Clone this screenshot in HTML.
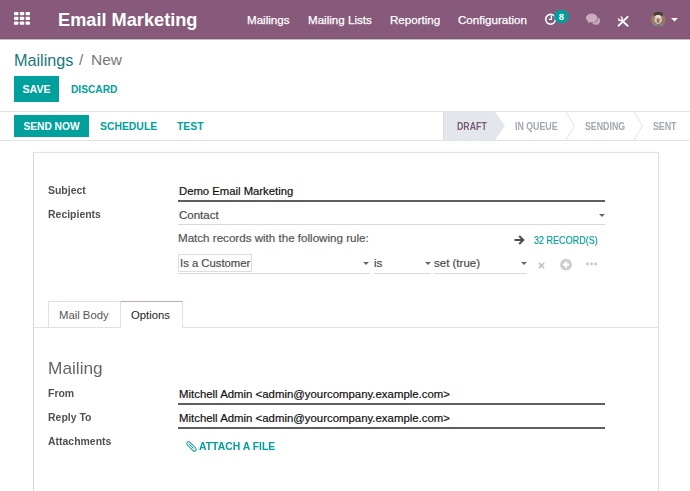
<!DOCTYPE html>
<html><head><meta charset="utf-8">
<style>
*{box-sizing:border-box;margin:0;padding:0}
html,body{width:690px;height:491px;overflow:hidden;background:#fff;font-family:"Liberation Sans",sans-serif;color:#4c4c4c}
.a{position:absolute;white-space:nowrap}
#nav{position:absolute;left:0;top:0;width:690px;height:40px;background:#875A7B;border-bottom:1px solid #c9bcc5;box-shadow:inset 0 -1px 0 #7d5272}
#nav .m{position:absolute;top:13px;-webkit-text-stroke:0.25px #fff;color:#fff;font-size:11.6px;line-height:14px}
.teal{color:#00A09D}
.btn{position:absolute;background:#00A09D;color:#fff;font-weight:bold;font-size:10.4px;text-align:center}
.lbl{position:absolute;font-weight:bold;font-size:11.5px;color:#505050;line-height:12px;transform:scaleX(0.91);transform-origin:0 0}
.fld{position:absolute;font-size:11.5px;color:#222;line-height:14px;-webkit-text-stroke:0.2px currentColor}
.ul{position:absolute;height:1px;background:#d9d9d9}
.ulb{position:absolute;height:2px;background:#5e5e5e}
.st{position:absolute;top:121px;font-size:10px;font-weight:bold;color:#a1a8ae;line-height:12px;transform:scaleX(0.88);transform-origin:0 0}
</style></head><body>
<div id="nav">
  <svg class="a" style="left:14px;top:12px" width="16" height="13" viewBox="0 0 16 13"><g fill="#fff"><rect x="0" y="0" width="4.4" height="3.3" rx="0.7"/><rect x="5.8" y="0" width="4.4" height="3.3" rx="0.7"/><rect x="11.6" y="0" width="4.4" height="3.3" rx="0.7"/><rect x="0" y="4.75" width="4.4" height="3.3" rx="0.7"/><rect x="5.8" y="4.75" width="4.4" height="3.3" rx="0.7"/><rect x="11.6" y="4.75" width="4.4" height="3.3" rx="0.7"/><rect x="0" y="9.5" width="4.4" height="3.3" rx="0.7"/><rect x="5.8" y="9.5" width="4.4" height="3.3" rx="0.7"/><rect x="11.6" y="9.5" width="4.4" height="3.3" rx="0.7"/></g></svg>
  <div class="a" style="left:58px;top:10px;font-size:18.2px;font-weight:bold;color:#fff;line-height:21px">Email Marketing</div>
  <div class="m a" style="left:247px">Mailings</div>
  <div class="m a" style="left:308px">Mailing Lists</div>
  <div class="m a" style="left:390px">Reporting</div>
  <div class="m a" style="left:458px">Configuration</div>
  <!-- clock -->
  <svg class="a" style="left:543px;top:12px" width="15" height="15" viewBox="0 0 15 15">
    <circle cx="7.6" cy="7.3" r="4.9" fill="none" stroke="#fff" stroke-width="1.6"/>
    <path d="M8.4 3.6 V7.3 H5.8" fill="none" stroke="#fff" stroke-width="1.3"/>
  </svg>
  <div class="a" style="left:554px;top:10px;width:15px;height:13px;border-radius:6.5px;background:#00A09D;color:#fff;font-size:9.5px;font-weight:bold;text-align:center;line-height:14px">8</div>
  <!-- chat -->
  <svg class="a" style="left:580px;top:8px" width="26" height="22" viewBox="0 0 26 22">
    <ellipse cx="15.8" cy="12.8" rx="4.3" ry="3.7" fill="#c6a8bc"/>
    <path d="M16.5 15.5 L19 17 L14 16.3Z" fill="#c6a8bc"/>
    <ellipse cx="11.7" cy="9.9" rx="6.3" ry="4.9" fill="#875A7B"/>
    <ellipse cx="11.7" cy="9.9" rx="5.3" ry="4" fill="#c9adc0" stroke="#d7c3d0" stroke-width="0.6"/>
    <path d="M8.5 13.2 L7.6 15.2 L11 13.8Z" fill="#d0b8c8"/>
  </svg>
  <!-- tools -->
  <svg class="a" style="left:612px;top:10px" width="24" height="24" viewBox="0 0 24 24">
    <path d="M6.6 15.6 L15.6 6.9" stroke="#fff" stroke-width="2" stroke-linecap="round"/>
    <path d="M10.2 10.9 L15.6 15.8" stroke="#fff" stroke-width="1.9" stroke-linecap="round"/>
    <circle cx="8.4" cy="8.7" r="1.8" fill="none" stroke="#fff" stroke-width="1.4"/>
    <path d="M5.6 7.6 L7.6 5.6 L9.2 7.6 L7.6 9.2Z" fill="#875A7B"/>
  </svg>
  <!-- avatar -->
  <svg class="a" style="left:650px;top:11px" width="17" height="17" viewBox="0 0 17 17">
    <defs><clipPath id="cp"><circle cx="8.3" cy="8.3" r="7.5"/></clipPath><filter id="bl" x="-10%" y="-10%" width="120%" height="120%"><feGaussianBlur stdDeviation="0.55"/></filter></defs>
    <g clip-path="url(#cp)"><g filter="url(#bl)">
      <rect x="0" y="0" width="17" height="17" fill="#7f6a55"/>
      <ellipse cx="3" cy="9" rx="2.6" ry="5" fill="#97805f"/>
      <ellipse cx="13.6" cy="9" rx="2.6" ry="5" fill="#917a5c"/>
      <ellipse cx="8.3" cy="3" rx="5" ry="2.6" fill="#4a3e36"/>
      <ellipse cx="8.2" cy="8.6" rx="3.9" ry="4.6" fill="#d2c0b4"/>
      <ellipse cx="8.2" cy="5.6" rx="3" ry="1.5" fill="#e6dcd8"/>
      <ellipse cx="8.1" cy="9.6" rx="1.5" ry="2.6" fill="#a57458"/>
      <ellipse cx="4.5" cy="14.5" rx="3" ry="2" fill="#7a8c96"/>
      <ellipse cx="12" cy="14.8" rx="2.4" ry="1.8" fill="#7e8e94"/>
    </g></g>
  </svg>
  <svg class="a" style="left:671px;top:18px" width="7" height="4" viewBox="0 0 7 4"><path d="M0 0H7L3.5 3.5Z" fill="#fff"/></svg>
</div>

<!-- control panel -->
<div class="a" style="left:14px;top:51px;font-size:16.2px;line-height:18px;color:#18797b">Mailings</div>
<div class="a" style="left:79px;top:51px;font-size:15.5px;line-height:18px;color:#777">/</div>
<div class="a" style="left:91px;top:51px;font-size:15.5px;line-height:18px;color:#777">New</div>
<div class="btn" style="left:14px;top:76px;width:45px;height:26px;line-height:26px;font-size:10.6px">SAVE</div>
<div class="a teal" style="left:71px;top:84px;font-size:10.2px;font-weight:bold;line-height:12px">DISCARD</div>

<div class="a" style="left:0;top:111px;width:690px;height:1px;background:#dfe2e6"></div>
<div class="a" style="left:0;top:140px;width:690px;height:1px;background:#dfe2e6"></div>

<div class="btn" style="left:14px;top:115px;width:75px;height:22px;line-height:23px;font-size:10.2px">SEND NOW</div>
<div class="a teal" style="left:100px;top:121px;font-size:10.4px;font-weight:bold;line-height:12px">SCHEDULE</div>
<div class="a teal" style="left:177px;top:121px;font-size:10.4px;font-weight:bold;line-height:12px">TEST</div>

<!-- statusbar -->
<svg class="a" style="left:443px;top:112px" width="247" height="28" viewBox="0 0 247 28">
  <path d="M0 0 H52 L62 14 L52 28 H0Z" fill="#e3e6ea"/>
  <path d="M0 0 V28" stroke="#d5d9de" stroke-width="1"/>
  <path d="M123 0 L131.5 14 L123 28" fill="none" stroke="#dfe3e7" stroke-width="1"/>
  <path d="M191 0 L199.5 14 L191 28" fill="none" stroke="#dfe3e7" stroke-width="1"/>
</svg>
<div class="st" style="left:457px;color:#7d5a78">DRAFT</div>
<div class="st" style="left:515px">IN QUEUE</div>
<div class="st" style="left:585px">SENDING</div>
<div class="st" style="left:653px">SENT</div>

<!-- sheet -->
<div class="a" style="left:33px;top:152px;width:626px;height:350px;border:1px solid #dde3e8;border-right-color:#d6e0e7;border-left-color:#d4d7db;background:#fff;box-shadow:0 0 3px rgba(0,0,0,0.04)"></div>

<div class="lbl" style="left:48px;top:184px">Subject</div>
<div class="lbl" style="left:48px;top:208px">Recipients</div>
<div class="fld" style="left:179px;top:184px;font-size:11.3px;color:#111">Demo Email Marketing</div>
<div class="ulb" style="left:178px;top:200px;width:427px"></div>
<div class="fld" style="left:179px;top:208px;color:#4c4c4c">Contact</div>
<div class="ul" style="left:178px;top:224px;width:427px"></div>
<svg class="a" style="left:599px;top:214px" width="6" height="3" viewBox="0 0 6 3"><path d="M0 0H6L3 3Z" fill="#666"/></svg>

<div class="fld" style="left:178px;top:231px;font-size:11.6px;color:#555">Match records with the following rule:</div>
<svg class="a" style="left:514px;top:235px" width="11" height="10" viewBox="0 0 11 10"><path d="M0.5 5H9 M5.2 1 L9.3 5 L5.2 9" fill="none" stroke="#4f4f4f" stroke-width="2"/></svg>
<div class="a teal" style="left:534px;top:235px;font-size:10.4px;line-height:11px;transform:scaleX(0.87);transform-origin:0 0;-webkit-text-stroke:0.15px #00A09D">32 RECORD(S)</div>

<div class="a" style="left:178px;top:254px;width:74px;height:18px;border:1px solid #d6dee6"></div>
<div class="fld" style="left:180px;top:256px;color:#4c4c4c;font-size:11.3px">Is a Customer</div>
<div class="ul" style="left:178px;top:273px;width:192px"></div>
<svg class="a" style="left:363px;top:262px" width="6" height="3" viewBox="0 0 6 3"><path d="M0 0H6L3 3Z" fill="#666"/></svg>
<div class="fld" style="left:374px;top:256px;color:#4c4c4c">is</div>
<div class="ul" style="left:374px;top:273px;width:57px"></div>
<svg class="a" style="left:425px;top:262px" width="6" height="3" viewBox="0 0 6 3"><path d="M0 0H6L3 3Z" fill="#666"/></svg>
<div class="fld" style="left:434px;top:256px;color:#4c4c4c">set (true)</div>
<div class="ul" style="left:434px;top:273px;width:93px"></div>
<svg class="a" style="left:521px;top:262px" width="6" height="3" viewBox="0 0 6 3"><path d="M0 0H6L3 3Z" fill="#666"/></svg>
<svg class="a" style="left:538px;top:262px" width="7" height="7" viewBox="0 0 7 7"><path d="M0.9 0.9L6.1 6.1M6.1 0.9L0.9 6.1" stroke="#c4c6c9" stroke-width="1.9"/></svg>
<svg class="a" style="left:560px;top:258px" width="13" height="13" viewBox="0 0 13 13"><circle cx="6" cy="6.6" r="5.9" fill="#cbcdd0"/><path d="M6 3.4V9.8M2.8 6.6H9.2" stroke="#fff" stroke-width="2.2"/></svg>
<svg class="a" style="left:586px;top:262px" width="12" height="4" viewBox="0 0 12 4"><circle cx="1.5" cy="2" r="1.4" fill="#c6c8cb"/><circle cx="5.5" cy="2" r="1.4" fill="#c6c8cb"/><circle cx="9.5" cy="2" r="1.4" fill="#c6c8cb"/></svg>

<!-- tabs -->
<div class="a" style="left:34px;top:327px;width:624px;height:1px;background:#dee2e6"></div>
<div class="a" style="left:48px;top:301px;width:73px;height:26px;border:1px solid #dee2e6;border-bottom:none;background:#fff"></div>
<div class="a" style="left:120px;top:301px;width:63px;height:27px;border:1px solid #dee2e6;border-top:1px solid #c6a8c0;border-bottom:none;background:#fff"></div>
<div class="a" style="left:59px;top:308px;font-size:11.3px;color:#555;line-height:14px">Mail Body</div>
<div class="a" style="left:131px;top:308px;font-size:11.3px;color:#222;line-height:14px">Options</div>

<div class="a" style="left:48px;top:359px;font-size:16.6px;color:#666;line-height:20px;transform:scaleX(1.04);transform-origin:0 0">Mailing</div>
<div class="lbl" style="left:48px;top:387px">From</div>
<div class="lbl" style="left:48px;top:411px">Reply To</div>
<div class="lbl" style="left:48px;top:435px">Attachments</div>
<div class="fld" style="left:179px;top:387px;font-size:11.4px;color:#111">Mitchell Admin &lt;admin@yourcompany.example.com&gt;</div>
<div class="ulb" style="left:178px;top:403px;width:427px"></div>
<div class="fld" style="left:179px;top:411px;font-size:11.4px;color:#111">Mitchell Admin &lt;admin@yourcompany.example.com&gt;</div>
<div class="ulb" style="left:178px;top:427px;width:427px"></div>
<svg class="a" style="left:185px;top:440px" width="13" height="13" viewBox="0 0 13 13"><g transform="rotate(-45 6.5 6.5)"><rect x="4.6" y="0.6" width="3.8" height="11.8" rx="1.9" fill="none" stroke="#00A09D" stroke-width="1"/><path d="M6.5 3V9.5" stroke="#00A09D" stroke-width="0.9"/></g></svg>
<div class="a teal" style="left:199px;top:440px;font-size:11.2px;font-weight:bold;line-height:13px;transform:scaleX(0.93);transform-origin:0 0">ATTACH A FILE</div>
</body></html>
